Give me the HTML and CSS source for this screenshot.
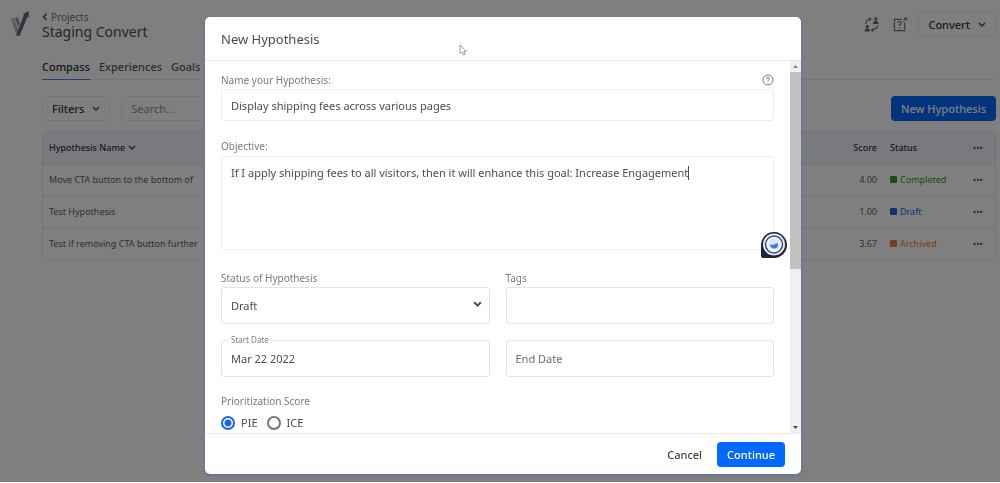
FILE: index.html
```html
<!DOCTYPE html>
<html lang="en">
<head>
<meta charset="utf-8">
<title>Compass - New Hypothesis</title>
<link rel="stylesheet" href="styles.css">
</head>
<body>
<div class="app">
  <header class="topbar">
    <svg class="logo" viewBox="0 0 20 26" aria-hidden="true">
      <path d="M1 8 L4 7 L9 20 L6 23Z" fill="#b9bdc4"/>
      <path d="M5 7 L8 6 L10 12 L8 16Z" fill="#9aa0aa"/>
      <path d="M6 24 L14 4 L12.500 3.500 L18.500 0 L19 6.500 L17.500 5.500 L10 24 Q8 26 6 24Z" fill="#5d6a80"/>
    </svg>
    <div class="titles">
      <a class="crumb" href="#"><svg class="back" viewBox="0 0 6 8"><path d="M4.500 1 L1.500 4 L4.500 7"/></svg>Projects</a>
      <h1>Staging Convert</h1>
    </div>
    <div class="tools">
      <button class="icon-btn" aria-label="Switch user"><svg viewBox="0 0 16 16">
        <path d="M2 7.500 Q2 3 7 2 M14.500 9 Q14 13 8.500 14 M5.500 .8 L7.500 2 L6 4 M10 12.500 L8 14 L9.500 15.600" class="line"/>
        <circle cx="12.500" cy="2" r="1.800"/><path d="M9.500 7.500 Q10 4 12.500 4 Q15 4 15.500 7.500Z"/>
        <circle cx="3.500" cy="10" r="1.800"/><path d="M.5 15.500 Q1 12 3.500 12 Q6 12 6.500 15.500Z"/></svg></button>
      <button class="icon-btn" aria-label="Help"><svg viewBox="0 0 16 16">
        <path d="M9.500 2.500 H1.500 V14.500 H12.500 V6 M11 4.500 L14.500 1 M12 1 H14.500 V3.500 M5 6.500 Q5 4.800 7 4.800 Q9 4.800 9 6.300 Q9 7.500 7 8.300 V9.500 M7 11 V12.300" class="line"/></svg></button>
      <button class="btn outline">Convert <svg class="chev" viewBox="0 0 8 6"><path d="M1 1 L4 4 L7 1"/></svg></button>
    </div>
  </header>
  <main class="content">
    <nav class="tabs">
      <a class="tab active" href="#">Compass</a>
      <a class="tab" href="#">Experiences</a>
      <a class="tab" href="#">Goals</a>
    </nav>
    <div class="filters">
      <button class="btn outline">Filters <svg class="chev" viewBox="0 0 8 6"><path d="M1 1 L4 4 L7 1"/></svg></button>
      <input class="search" type="text" placeholder="Search..." aria-label="Search">
      <button class="btn primary push">New Hypothesis</button>
    </div>
    <div class="table-wrap">
    <table class="grid">
      <thead><tr><th>Hypothesis Name <svg class="chev" viewBox="0 0 8 6"><path d="M1 1 L4 4 L7 1"/></svg></th><th class="score">Score</th><th class="status">Status</th><th class="more">•••</th></tr></thead>
      <tbody>
        <tr><td>Move CTA button to the bottom of</td><td class="score">4.00</td><td class="status done">Completed</td><td class="more">•••</td></tr>
        <tr><td>Test Hypothesis</td><td class="score">1.00</td><td class="status draft">Draft</td><td class="more">•••</td></tr>
        <tr><td>Test if removing CTA button further</td><td class="score">3.67</td><td class="status archived">Archived</td><td class="more">•••</td></tr>
      </tbody>
    </table>
    </div>
  </main>
</div>

<div class="overlay">
  <form class="modal" role="dialog" aria-labelledby="modal-title">
    <h2 class="modal-head" id="modal-title">New Hypothesis</h2>
    <div class="modal-main">
      <div class="modal-body">
        <div class="field">
          <div class="label-row"><label for="name">Name your Hypothesis:</label>
            <svg class="help" viewBox="0 0 12 12"><circle cx="6" cy="6" r="5"/><path d="M4.400 4.800 Q4.400 3.400 6 3.400 Q7.600 3.400 7.600 4.700 Q7.600 5.600 6 6.300 V7.200 M6 8.200 V9"/></svg></div>
          <input class="box short" id="name" type="text" value="Display shipping fees across various pages">
        </div>
        <div class="field objective">
          <label for="objective">Objective:</label>
          <div class="area">
            <textarea class="box" id="objective">If I apply shipping fees to all visitors, then it will enhance this goal: Increase Engagement</textarea>
            <span class="caret" aria-hidden="true"></span>
            <svg class="assistant" viewBox="0 0 28 28" aria-hidden="true">
              <path d="M3 27 Q1 27 1 25 V13 A13 13 0 1 1 14 27Z" fill="#22223a"/>
              <circle cx="14" cy="13.500" r="11" fill="#e9eefc"/>
              <circle cx="14" cy="13.500" r="8.500" fill="#f4f8ff" stroke="#3b4a86" stroke-width="1.500"/>
              <circle cx="14" cy="13.500" r="5.500" fill="#d9e7ff"/>
              <path d="M10 13 Q12 14.500 14 13.500 Q16 12 18 12.500 Q18.500 17.500 14 17.500 Q10.500 17.500 10 13Z" fill="#3f7be8"/>
            </svg>
          </div>
        </div>
        <div class="pair">
          <div class="field">
            <label for="status">Status of Hypothesis</label>
            <div class="select-wrap"><select class="box" id="status"><option>Draft</option></select>
              <svg class="chev" viewBox="0 0 8 6"><path d="M1 1 L4 4 L7 1"/></svg></div>
          </div>
          <div class="field">
            <label for="tags">Tags</label>
            <input class="box" id="tags" type="text">
          </div>
        </div>
        <div class="pair dates">
          <fieldset class="notched"><legend><label for="start">Start Date</label></legend>
            <input id="start" type="text" value="Mar 22 2022"></fieldset>
          <input class="box end" type="text" placeholder="End Date" aria-label="End Date">
        </div>
        <div class="field priority" role="radiogroup" aria-labelledby="prio">
          <span class="label" id="prio">Prioritization Score</span>
          <div class="radios">
            <label class="radio"><input type="radio" name="score" checked>PIE</label>
            <label class="radio"><input type="radio" name="score">ICE</label>
          </div>
        </div>
      </div>
      <div class="scrollbar" aria-hidden="true">
        <svg viewBox="0 0 11 11"><path d="M3 7 L5.500 4 L8 7Z" fill="#8a8a8a"/></svg>
        <div class="thumb"></div>
        <svg class="down" viewBox="0 0 11 11"><path d="M3 4 L5.500 7 L8 4Z" fill="#444"/></svg>
      </div>
    </div>
    <footer class="modal-foot">
      <button class="btn text" type="button">Cancel</button>
      <button class="btn primary" type="button">Continue</button>
    </footer>
  </form>
</div>
<svg class="cursor" viewBox="0 0 8 12" aria-hidden="true"><path d="M1 1 V9.500 L3 8 L4.500 11 L6 10.300 L4.800 7.500 H7.200Z"/></svg>
</body>
</html>
```
FILE: styles.css
```css
* { box-sizing: border-box; }
body { margin: 0; min-height: 100vh; background: #fff; color: #4a4d57; font: 11px/16px "Noto Sans", sans-serif; }
button, input, select, textarea { font: inherit; color: inherit; margin: 0; }
a { color: inherit; text-decoration: none; }
h1, h2 { margin: 0; font-weight: 400; }
svg { flex: none; }

.app { padding: 11px 4px 0 10px; }
.topbar { display: flex; align-items: flex-start; }
.logo { width: 20px; height: 26px; margin-right: 12px; }
.titles { flex: 1; }
.crumb { display: flex; align-items: center; gap: 3px; font-size: 10px; line-height: 12px; color: #70747f; }
.back { width: 6px; height: 8px; fill: none; stroke: #4a4f5c; stroke-width: 1.5; }
h1 { font-size: 14px; line-height: 17px; color: #4a4d57; }
.tools { display: flex; align-items: center; gap: 14px; margin-top: 1px; }
.icon-btn { display: flex; padding: 0; border: 0; background: none; }
.icon-btn svg { width: 15px; height: 15px; fill: #6a6f7e; }
.icon-btn .line { fill: none; stroke: #6a6f7e; stroke-width: 1.2; }
.icon-btn:nth-child(2) { margin-right: -4px; }

.btn { display: inline-flex; align-items: center; justify-content: center; gap: 8px; height: 25px; padding: 0 9px; border: 1px solid transparent; border-radius: 4px; background: none; font-weight: 500; white-space: nowrap; }
.btn.outline { border-color: #eceef3; color: #30333d; }
.btn.primary { background: #0568fd; color: #fff; }
.btn.text { color: #3a3d48; }
.push { margin-left: auto; }
.chev { width: 8px; height: 6px; fill: none; stroke: #4a4e5a; stroke-width: 1.5; }

.content { padding-left: 32px; }
.tabs { display: flex; gap: 9px; margin-top: 19px; border-bottom: 1px solid #e8eaf0; font-weight: 500; }
.tab { height: 21px; margin-bottom: -1px; color: #555964; }
.tab.active { color: #2b2e38; border-bottom: 1px solid #4583ea; }
.filters { display: flex; gap: 11px; margin-top: 16px; }
.search { width: 200px; height: 25px; padding: 0 9px; border: 1px solid #eceef3; border-radius: 4px; background: none; }
.search::placeholder { color: #8a8e99; opacity: 1; }
.table-wrap { margin-top: 10px; border: 1px solid #e6e8ef; border-radius: 4px; overflow: hidden; }
.grid { width: 100%; table-layout: fixed; border-collapse: collapse; font-size: 9px; color: #5c5f6a; }
.grid th, .grid td { height: 32px; padding: 0 6px; text-align: left; white-space: nowrap; border-top: 1px solid #e6e8ef; }
.grid th { font-weight: 500; color: #30333d; background: #f3f5fb; border-top: 0; }
.grid .score { width: 70px; text-align: right; }
.grid .status { width: 76px; padding-left: 7px; }
.grid .more { width: 36px; padding: 0 12px 0 0; text-align: right; font-weight: 400; color: #4a4d57; }
.grid td.status::before { content: ""; display: inline-block; width: 7px; height: 7px; margin-right: 3px; border-radius: 1px; background: currentColor; }
.grid .done { color: #2e9a34; }
.grid .draft { color: #1d62e0; }
.grid .archived { color: #e8833a; }

.overlay { position: fixed; inset: 0 0 1px; display: flex; justify-content: center; padding: 17px 0 8px 6px; background: rgba(0, 0, 0, .5); }
.modal { display: flex; flex-direction: column; width: 100%; max-width: 596px; border-radius: 5px; background: #fff; box-shadow: 0 1px 2px 1px #66779b; overflow: hidden; }
.modal-head { padding: 12px 16px 11px; border-bottom: 1px solid #ebebed; font-size: 13px; line-height: 20px; }
.modal-main { flex: 1; min-height: 0; display: flex; }
.modal-body { flex: 1; padding: 12px 16px 0; overflow: hidden; }
label, .label { display: block; font-size: 10px; line-height: 14px; color: #777b87; }
.label-row { display: flex; justify-content: space-between; align-items: center; }
.help { width: 12px; height: 12px; fill: none; stroke: #747985; }
.box { display: block; width: 100%; height: 37px; padding: 0 9px; border: 1px solid #e2e4e9; border-radius: 3px; background: #fff; outline: 0; }
.box.short { height: 32px; margin-top: 2px; border-color: #ebedf2; }
.objective { margin-top: 18px; }
.area { position: relative; margin-top: 3px; }
textarea.box { height: 94px; padding: 8px 9px; resize: none; border-color: #ebedf2; }
.caret { position: absolute; left: 467px; top: 10px; width: 1px; height: 14px; background: #4a4d57; }
.assistant { position: absolute; right: -14px; bottom: -9px; width: 28px; height: 28px; }
.pair { display: grid; grid-template-columns: 1fr 1fr; gap: 16px; margin-top: 21px; align-items: end; }
.pair .box { margin-top: 2px; }
.select-wrap { display: flex; align-items: center; position: relative; }
select.box { appearance: none; }
.select-wrap .chev { position: absolute; right: 8px; width: 9px; height: 7px; stroke-width: 1.8; }
.pair.dates { margin-top: 11px; }
.notched { min-width: 0; height: 42px; margin: 0; padding: 0 5px; border: 1px solid #e2e4e9; border-radius: 3px; }
.notched legend { padding: 0 4px; }
.notched label { font-size: 8px; line-height: 10px; }
.notched input { display: block; width: 100%; height: 26px; padding: 0 4px; border: 0; background: none; outline: 0; }
.end::placeholder { color: #6a6e79; opacity: 1; }
.priority { margin-top: 17px; }
.radios { display: flex; gap: 9px; margin-top: 7px; }
.radio { display: flex; align-items: center; gap: 6px; font-size: 11px; line-height: 16px; color: #4b4f5a; }
.radio input { appearance: none; width: 14px; height: 14px; border: 2px solid #70747e; border-radius: 50%; background: #fff; }
.radio input:checked { border-color: #1766e8; background: radial-gradient(circle, #1766e8 3px, #fff 4px); }
.scrollbar { display: flex; flex-direction: column; width: 11px; background: #f0f0f1; }
.scrollbar svg { width: 11px; height: 11px; }
.thumb { height: 53%; background: #c1c1c1; }
.down { margin-top: auto; }
.modal-foot { display: flex; justify-content: flex-end; gap: 5px; padding: 8px 16px 7px; border-top: 1px solid #ebebed; }
.cursor { position: fixed; left: 459px; top: 44px; width: 8px; height: 12px; fill: #fff; stroke: #9a9ca3; stroke-width: 1; }
```
